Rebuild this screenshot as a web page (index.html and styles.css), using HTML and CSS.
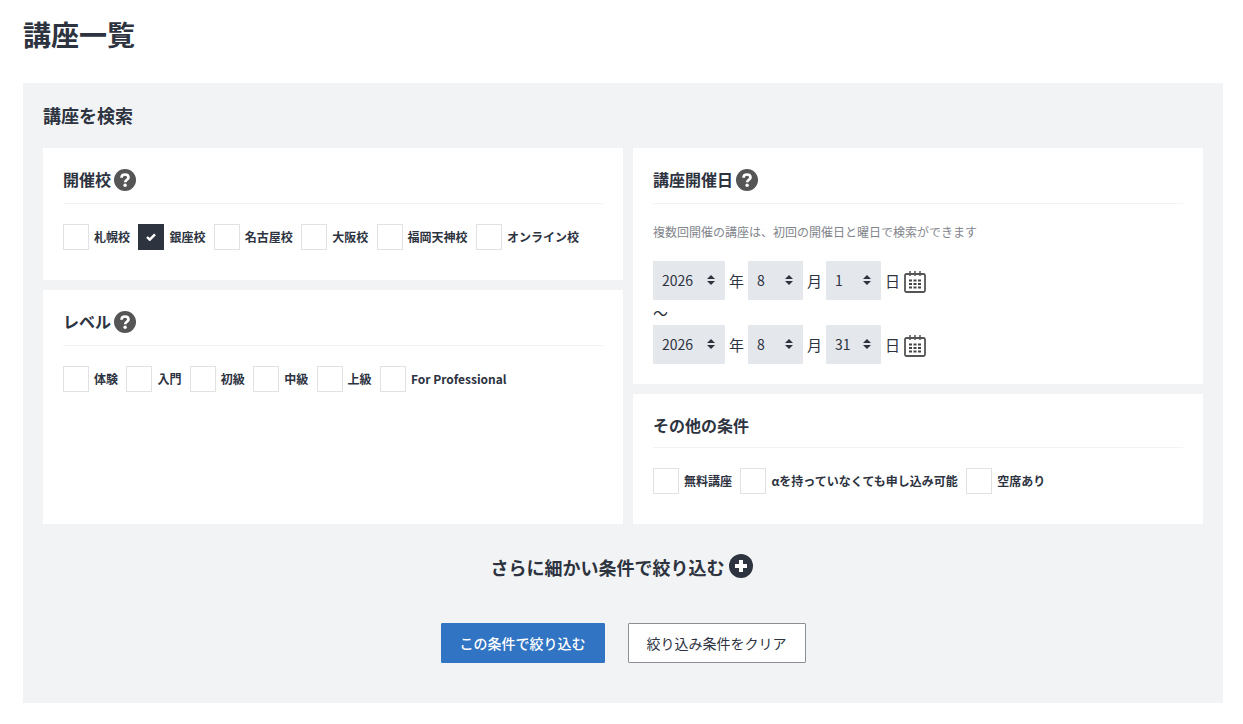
FILE: index.html
```
<!DOCTYPE html>
<html lang="ja">
<head>
  <meta charset="UTF-8" />
  <meta name="viewport" content="width=device-width, initial-scale=1.0" />
  <title>講座一覧</title>
  <link rel="stylesheet" href="styles.css">
</head>
<body>
  <!-- Shared icons -->
  <svg class="sprite" aria-hidden="true">
    <symbol id="icon-help" viewBox="0 0 22 22">
      <circle cx="11" cy="11" r="11" fill="#555" />
      <path d="M7.500 8.700C7.600 6.500 9 5.500 11 5.500c2.100 0 3.500 1.100 3.500 2.900 0 2.300-3.300 2.500-3.300 4.900" fill="none" stroke="#fff" stroke-width="2.700" />
      <circle cx="11.100" cy="16.300" r="1.700" fill="#fff" />
    </symbol>
    <symbol id="icon-calendar" viewBox="0 0 22 22">
      <rect x="1" y="3" width="20" height="18" rx="1.500" fill="none" stroke="#555" stroke-width="1.800" />
      <path d="M6 0v5M11 0v5M16 0v5" stroke="#555" stroke-width="1.500" />
      <path d="M5 9.500h3M9.500 9.500h3M14 9.500h3M5 13h3M9.500 13h3M14 13h3M5 16.500h3M9.500 16.500h3M14 16.500h3" stroke="#444" stroke-width="2" />
    </symbol>
  </svg>

  <main class="container">
    <h1>講座一覧</h1>
    <form class="search">
      <h2>講座を検索</h2>
      <div class="columns">
        <div class="column">
          <section class="card">
            <h3>開催校 <button type="button" class="icon-btn" aria-label="開催校について"><svg class="icon"><use href="#icon-help" /></svg></button></h3>
            <div class="checks">
              <label><input type="checkbox" name="school" />札幌校</label>
              <label><input type="checkbox" name="school" checked />銀座校</label>
              <label><input type="checkbox" name="school" />名古屋校</label>
              <label><input type="checkbox" name="school" />大阪校</label>
              <label><input type="checkbox" name="school" />福岡天神校</label>
              <label><input type="checkbox" name="school" />オンライン校</label>
            </div>
          </section>
          <section class="card card-grow">
            <h3>レベル <button type="button" class="icon-btn" aria-label="レベルについて"><svg class="icon"><use href="#icon-help" /></svg></button></h3>
            <div class="checks">
              <label><input type="checkbox" name="level" />体験</label>
              <label><input type="checkbox" name="level" />入門</label>
              <label><input type="checkbox" name="level" />初級</label>
              <label><input type="checkbox" name="level" />中級</label>
              <label><input type="checkbox" name="level" />上級</label>
              <label><input type="checkbox" name="level" />For Professional</label>
            </div>
          </section>
        </div>

        <div class="column">
          <section class="card card-dates">
            <h3>講座開催日 <button type="button" class="icon-btn" aria-label="講座開催日について"><svg class="icon"><use href="#icon-help" /></svg></button></h3>
            <p class="note">複数回開催の講座は、初回の開催日と曜日で検索ができます</p>
            <div class="date-row">
              <select class="year" id="fromYear" aria-label="開始年"><option>2026</option></select>
              <label for="fromYear">年</label>
              <select id="fromMonth" aria-label="開始月"><option>8</option></select>
              <label for="fromMonth">月</label>
              <select id="fromDay" aria-label="開始日"><option>1</option></select>
              <label for="fromDay">日</label>
              <button type="button" class="icon-btn" aria-label="カレンダー"><svg class="icon"><use href="#icon-calendar" /></svg></button>
            </div>
            <div class="tilde">～</div>
            <div class="date-row">
              <select class="year" id="toYear" aria-label="終了年"><option>2026</option></select>
              <label for="toYear">年</label>
              <select id="toMonth" aria-label="終了月"><option>8</option></select>
              <label for="toMonth">月</label>
              <select id="toDay" aria-label="終了日"><option>31</option></select>
              <label for="toDay">日</label>
              <button type="button" class="icon-btn" aria-label="カレンダー"><svg class="icon"><use href="#icon-calendar" /></svg></button>
            </div>
          </section>
          <section class="card card-grow">
            <h3>その他の条件</h3>
            <div class="checks">
              <label><input type="checkbox" name="other" />無料講座</label>
              <label><input type="checkbox" name="other" />αを持っていなくても申し込み可能</label>
              <label><input type="checkbox" name="other" />空席あり</label>
            </div>
          </section>
        </div>
      </div>

      <button type="button" class="more-btn">
        さらに細かい条件で絞り込む
        <svg class="icon-plus" viewBox="0 0 24 24" aria-hidden="true">
          <circle cx="12" cy="12" r="12" fill="#2d333f" />
          <path d="M12 6v12M6 12h12" stroke="#fff" stroke-width="4" />
        </svg>
      </button>

      <div class="buttons">
        <button type="submit" class="submit-btn">この条件で絞り込む</button>
        <button type="reset" class="clear-btn">絞り込み条件をクリア</button>
      </div>
    </form>
  </main>
</body>
</html>
```
FILE: styles.css
```
* {
  box-sizing: border-box;
}

body {
  margin: 0;
  background: #fff;
  color: #2d333f;
  font-family: "Noto Sans CJK JP", sans-serif;
  font-size: 15px;
  line-height: 24px;
}

button,
select {
  font-family: inherit;
  color: inherit;
  cursor: pointer;
}

.sprite {
  display: none;
}

.container {
  padding: 13px 20px 20px 23px;
}

h1 {
  margin: 0 0 28px;
  font-size: 28px;
  line-height: 42px;
}

.search {
  padding: 20px 20px 40px;
  background: #f2f3f5;
}

h2 {
  margin: 0 0 20px;
  font-size: 18px;
  line-height: 25px;
}

.columns {
  display: grid;
  grid-template-columns: 58fr 57fr;
  gap: 10px;
}

.column {
  display: flex;
  flex-direction: column;
  gap: 10px;
}

.card {
  padding: 20px 20px 30px;
  background: #fff;
}

.card-dates {
  padding-bottom: 20px;
}

.card-grow {
  flex: 1;
}

h3 {
  display: flex;
  align-items: flex-start;
  gap: 3px;
  margin: 0 0 20px;
  padding-bottom: 11px;
  border-bottom: 1px solid #f2f3f5;
  font-size: 16px;
  line-height: 22px;
}

.icon-btn {
  padding: 1px 0;
  border: 0;
  background: none;
}

.icon {
  display: block;
  width: 22px;
  height: 22px;
}

.checks label {
  display: inline-flex;
  align-items: center;
  gap: 5px;
  margin-right: 5px;
  vertical-align: top;
  font-size: 12px;
  font-weight: 700;
  line-height: 26px;
}

.checks input {
  appearance: none;
  width: 26px;
  height: 26px;
  margin: 0;
  border: 1px solid #e1e1e6;
  background: #fff;
}

.checks input:checked {
  border-color: #2d333f;
  background: #2d333f url("data:image/svg+xml,%3Csvg xmlns='http://www.w3.org/2000/svg' viewBox='0 0 10 8'%3E%3Cpath d='M1 4l2.700 2.700L9 1.300' fill='none' stroke='white' stroke-width='2.400'/%3E%3C/svg%3E") center / 10px 8px no-repeat;
}

.note {
  margin: 0 0 22px;
  color: #82858c;
  font-size: 12px;
  line-height: 15px;
}

.date-row {
  display: flex;
  align-items: center;
  gap: 4px;
}

.date-row select {
  appearance: none;
  width: 55px;
  height: 39px;
  padding: 0 9px 1px;
  border: 0;
  border-radius: 1px;
  background: #e4e7eb url("data:image/svg+xml,%3Csvg xmlns='http://www.w3.org/2000/svg' viewBox='0 0 8 10'%3E%3Cpath d='M4 0l4 4H0zM4 10L0 6h8z' fill='%232d333f'/%3E%3C/svg%3E") right 10px top 14px / 8px 10px no-repeat;
  font-size: 14px;
}

.date-row .year {
  width: 72px;
}

.date-row .icon-btn {
  padding: 3px 0 0;
}

.tilde {
  line-height: 25px;
}

.more-btn {
  display: flex;
  align-items: flex-start;
  gap: 4px;
  margin: 30px auto 43px;
  padding: 0 3px 0 0;
  border: 0;
  background: none;
  font-size: 18px;
  font-weight: 700;
  line-height: 26px;
}

.icon-plus {
  width: 24px;
  height: 24px;
}

.buttons {
  display: flex;
  justify-content: center;
  gap: 23px;
}

.buttons button {
  height: 40px;
  padding: 0 18px;
  border: 1px solid #8c8f94;
  border-radius: 1px;
  background: #fff;
  font-size: 14px;
}

.buttons .submit-btn {
  border-color: #3074c3;
  background: #3074c3;
  color: #fff;
  font-weight: 500;
}
```
